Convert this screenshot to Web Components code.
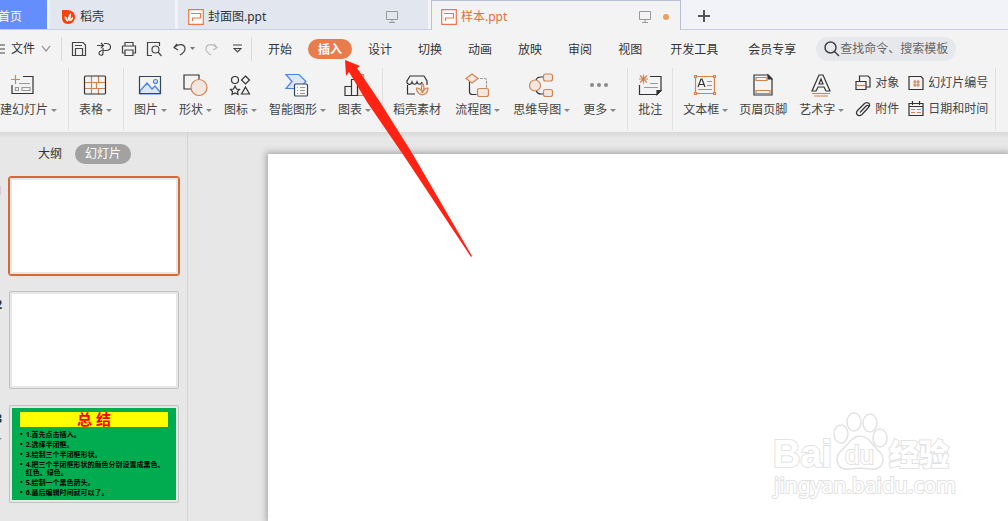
<!DOCTYPE html>
<html lang="zh-CN">
<head>
<meta charset="utf-8">
<title>样本.ppt</title>
<style>
  body {
    margin: 0;
    overflow: hidden;
    font: 12px/16px "Noto Sans", "Noto Sans CJK SC", sans-serif;
    color: #333;
    background: #f3f3f3;
  }
  svg {
    display: block;
    flex: none;
    fill: none;
    stroke: #333;
    stroke-width: 1.2;
  }
  .o { stroke: #d08450; }
  .of { stroke: #d08450; fill: #f2e6df; }
  .b { stroke: #4b80e8; fill: #dce6f8; }
  .g { stroke: #999; }
</style>
</head>
<body>

<app-window>
  <tab-strip slot="tabs">
    <doc-tab kind="home" label="首页"></doc-tab>
    <doc-tab kind="short" label="稻壳">
      <svg width="14" height="16" viewBox="0 0 14 16"><path d="M0 1h5c5 0 8 3 8 7s-3 7-7 7c-4 0-6-3-6-6z" fill="#f9420b" stroke="none"/><path d="M6 13C3 11 2 9 3 7c2 1 3 3 3 6zM6 12c0-3 0-6 3-8 0 4 0 6-3 8zM7 12c1-2 2-3 4-4 0 3-1 4-4 4z" fill="#fff" stroke="none"/></svg>
    </doc-tab>
    <doc-tab label="封面图.ppt" screen>
      <svg width="16" height="16" viewBox="0 0 16 16"><path d="M.7.7h14.6v14.6H.7z" fill="#fff" stroke="#ef7448"/><path d="M3 4.500h9.500v4.500H4.500V12" stroke="#ef7448"/></svg>
    </doc-tab>
    <doc-tab kind="active" label="样本.ppt" screen>
      <svg width="16" height="16" viewBox="0 0 16 16"><path d="M.7.7h14.6v14.6H.7z" fill="#fff" stroke="#ef7448"/><path d="M3 4.500h9.500v4.500H4.500V12" stroke="#ef7448"/></svg>
    </doc-tab>
  </tab-strip>

  <menu-row slot="menu">
    <menu-item>开始</menu-item>
    <menu-item active>插入</menu-item>
    <menu-item>设计</menu-item>
    <menu-item>切换</menu-item>
    <menu-item>动画</menu-item>
    <menu-item>放映</menu-item>
    <menu-item>审阅</menu-item>
    <menu-item>视图</menu-item>
    <menu-item wide>开发工具</menu-item>
    <menu-item wide>会员专享</menu-item>
    <command-search slot="search"></command-search>
  </menu-row>

  <ribbon-bar slot="ribbon">
    <ribbon-group first>
      <tool-button label="新建幻灯片" menu>
        <svg width="24" height="24"><path d="M13 3.500h10v17H2V12"/><path class="o" d="M1 6.500h9M5.500 2v9"/><path class="g" d="M9 10.500h11M5.500 14.500h3v3h-3zM12 14.500h8v3h-8z"/></svg>
      </tool-button>
    </ribbon-group>
    <ribbon-group>
      <tool-button label="表格" menu>
        <svg width="24" height="24"><path class="o" d="M2 9.500h20M2 15.500h20M8.500 3v18M15.500 3v6.500M13.500 9.500v6M15.500 15.500v6"/><rect x="1.500" y="3" width="21" height="18" rx="1"/></svg>
      </tool-button>
    </ribbon-group>
    <ribbon-group>
      <tool-button label="图片" menu>
        <svg width="24" height="24"><path class="b" d="M2 18l7-8 5 6 3-3 5 6v2H2z"/><circle class="b" cx="17.500" cy="8.500" r="2"/><path d="M1.500 3.500h21v17h-21z" stroke="#34465c"/></svg>
      </tool-button>
      <tool-button label="形状" menu>
        <svg width="26" height="24"><path d="M2 2h15v14H2z"/><circle class="of" cx="17" cy="14.500" r="8"/></svg>
      </tool-button>
      <tool-button label="图标" menu>
        <svg width="22" height="24"><circle cx="6" cy="7" r="3.500"/><path d="M16.500 3l4 4-4 4-4-4zM16.500 14l4 7h-8zM6 13l1.500 3 3 .5-2 2 .5 3-3-1.500-3 1.500.5-3-2-2 3-.5z"/></svg>
      </tool-button>
      <tool-button label="智能图形" menu>
        <svg width="26" height="24"><path class="b" d="M2 1.500h13l7 7-7 7H2l6-7z"/><rect x="10.500" y="11" width="13" height="12" rx="1" fill="#f7f7f7" stroke="#34465c"/><path class="g" d="M13 14.500h1M16 14.500h5M13 17.500h1M16 17.500h5M13 20.500h1M16 20.500h5"/></svg>
      </tool-button>
      <tool-button label="图表" menu>
        <svg width="22" height="24"><path class="of" d="M14.500 1.500h6v21h-6z"/><path d="M8.500 6.500h6v16h-6zM2 13.500h6.500v9H2z"/></svg>
      </tool-button>
    </ribbon-group>
    <ribbon-group loose>
      <tool-button label="稻壳素材">
        <svg width="24" height="24"><path d="M2.500 12v9H10M2 10V8l3-5h14l3 5v4M2 10c2 2 4 2 5-1 1 3 4 3 5 0 1 3 4 3 5 0"/><path class="of" d="M17.500 22c-4.500-1-6-4-6-7 3 0 5 2 6 5-1.500-4-1.500-7 0-10 2 3 2 6 0 10 1-3 3-5 5.500-5 0 4-1.500 6-5.500 7z"/></svg>
      </tool-button>
      <tool-button label="流程图" menu>
        <svg width="26" height="24"><path d="M5.500 9v10c0 2 1 2.500 3 2.500h4"/><path class="g" stroke-dasharray="3 1" d="M12 5.500h9c1 0 1.500 1 1.500 2V16"/><path class="of" d="M8 1l6 4.500-6 4.500-6-4.500z"/><rect class="of" x="13.500" y="15.500" width="11" height="8" rx="2"/></svg>
      </tool-button>
      <tool-button label="思维导图" menu>
        <svg width="26" height="24"><path d="M8 7q1-3 5-3h3M8 17q1 4 5 4h3"/><circle class="of" cx="7" cy="12.500" r="5.500"/><rect class="of" x="15.500" y="1" width="9" height="7" rx="2"/><rect class="of" x="15.500" y="16.500" width="9" height="7" rx="2"/></svg>
      </tool-button>
      <tool-button label="更多" menu>
        <svg width="20" height="24"><g fill="#888" stroke="none"><circle cx="3" cy="12" r="2"/><circle cx="10" cy="12" r="2"/><circle cx="17" cy="12" r="2"/></g></svg>
      </tool-button>
    </ribbon-group>
    <ribbon-group tight>
      <tool-button label="批注">
        <svg width="24" height="24"><path d="M12 3.500h11v14l-4 4H1.500V12"/><path d="M19 21.500v-4h4z" fill="#333"/><path class="g" d="M12 10.500h8M6 14.500h14"/><path class="o" d="M5.500 1.500v9M1 6h9M2 2.500l7 7M9 2.500l-7 7"/></svg>
      </tool-button>
    </ribbon-group>
    <ribbon-group tight>
      <tool-button label="文本框" menu>
        <svg width="24" height="24"><path class="o" d="M2.500 3.500h19v17h-19z"/><g class="of"><path d="M1.500 2.500h2v2h-2zM20.500 2.500h2v2h-2zM1.500 19.500h2v2h-2zM20.500 19.500h2v2h-2z"/></g><path d="M5 14l3-8h1l3 8M6 11.500h5"/><path class="g" d="M14 8.500h5M14 12.500h5M5 16.500h14"/></svg>
      </tool-button>
      <tool-button label="页眉页脚">
        <svg width="20" height="24"><path d="M1 2h14l4 4v16H1z" stroke-linejoin="round"/><path d="M15 2v4h4z" fill="#333"/><path class="o" d="M3 4.500h11v3H3zM3 17.500h14v3H3z"/></svg>
      </tool-button>
      <tool-button label="艺术字" menu>
        <svg width="22" height="24"><path d="M9 2h4l7 16h-4l-2-4H8l-2 4H2zM11 6l-2 5h4z"/><path class="o" d="M2 20.500h18M4 23h14"/></svg>
      </tool-button>
      <tool-stack>
        <tool-button label="对象" inline>
          <svg width="16" height="16"><path d="M4.500 6V1H13l2 2v9h-4M1 6.500h10v8H1z"/><path class="o" d="M2 10.500h8"/></svg>
        </tool-button>
        <tool-button label="附件" inline>
          <svg width="16" height="16"><path d="M5 11.500L11 5c2-1.500 3.500 0 2 2l-6 6.500c-4 3-7-1-4.500-4L9 3c3-3 7-.5 5 3"/></svg>
        </tool-button>
      </tool-stack>
      <tool-stack>
        <tool-button label="幻灯片编号" inline>
          <svg width="16" height="16"><path d="M1 1.500h12l2 2v11H1z"/><path class="o" d="M5 7h7M5 10h7M7 5v7M10 5v7"/></svg>
        </tool-button>
        <tool-button label="日期和时间" inline>
          <svg width="16" height="16"><path d="M1 2.500h14v12H1zM4.500 0v4M11.500 0v4M1 5.500h14"/><path class="o" d="M3 8.500h4M9 8.500h4M3 11.500h4M9 11.500h4"/></svg>
        </tool-button>
      </tool-stack>
    </ribbon-group>
  </ribbon-bar>

  <slide-panel slot="side">
    <slide-thumb number="1" selected></slide-thumb>
    <slide-thumb number="2"></slide-thumb>
    <slide-thumb number="3" animated><summary-slide></summary-slide></slide-thumb>
  </slide-panel>

  <slide-canvas></slide-canvas>
  <pointer-arrow slot="overlay"></pointer-arrow>
  <site-watermark slot="overlay"></site-watermark>
</app-window>

<script>
const base = `
  * { box-sizing: border-box; }
  button {
    border: 0;
    margin: 0;
    padding: 0;
    background: none;
    font: inherit;
    color: inherit;
    white-space: nowrap;
  }
`;

function define(name, render) {
  customElements.define(name, class extends HTMLElement {
    connectedCallback() {
      if (this.shadowRoot) return;
      this.attachShadow({ mode: 'open' });
      this.shadowRoot.innerHTML = render(this);
    }
  });
}

// the window is scrolled 12px past its left edge
define('app-window', () => `
  <style>
    ${base}
    :host {
      display: flex;
      flex-direction: column;
      position: relative;
      height: 100vh;
      margin-left: -12px;
    }
    main {
      flex: 1;
      display: flex;
      min-height: 0;
      background: linear-gradient(#d8d8d8, #e7e7e7 6px);
    }
  </style>
  <slot name="tabs"></slot>
  <slot name="menu"></slot>
  <slot name="ribbon"></slot>
  <main><slot name="side"></slot><slot></slot></main>
  <slot name="overlay"></slot>
`);

define('tab-strip', () => `
  <style>
    ${base}
    :host {
      display: flex;
      height: 30px;
      gap: 3px;
      background: linear-gradient(#f1f3f9 29px, #c9cfdf 29px);
    }
    button { padding: 2px 13px 0; }
    svg { display: block; }
  </style>
  <slot></slot>
  <button aria-label="新建标签"><svg width="14" height="14"><path d="M1 7h12M7 1v12" stroke="#555" stroke-width="2"/></svg></button>
`);

define('doc-tab', el => `
  <style>
    ${base}
    :host {
      display: block;
      width: 250px;
      height: 29px;
      background: #e2e6ef;
    }
    :host([kind="home"]) { width: 59px; background: #648efc; color: #fff; }
    :host([kind="short"]) { width: 125px; }
    :host([kind="active"]) {
      height: 30px;
      background: #f3f3f3;
      color: #e2703a;
      box-shadow: inset 1px 1px #b9c0d4, inset -1px 0 #b9c0d4;
    }
    button {
      display: flex;
      align-items: center;
      gap: 4px;
      width: 100%;
      height: 34px;
      padding: 0 12px 0 10px;
    }
    :host([kind="short"]) button { padding-left: 12px; }
    .screen { margin-left: auto; margin-right: 8px; }
    .dot { width: 6px; height: 6px; border-radius: 3px; }
    :host([kind="active"]) .dot { background: #e8a05a; }
  </style>
  <button>
    <slot></slot><span>${el.getAttribute('label')}</span>
    ${el.hasAttribute('screen') ? `
    <svg class="screen" width="12" height="12" fill="none" stroke="#999"><path d="M.5.500h11v8H.5zM6 8.500v3M3 11.500h6"/></svg>
    <i class="dot"></i>` : ''}
  </button>
`);

define('menu-row', () => `
  <style>
    ${base}
    :host {
      display: flex;
      align-items: center;
      height: 38px;
      padding-left: 6px;
    }
    svg { display: block; fill: none; stroke: #444; stroke-width: 1.2; }
    .file { display: flex; align-items: center; gap: 6px; padding-right: 10px; }
    .quick {
      display: flex;
      align-items: center;
      gap: 9px;
      height: 24px;
      padding: 0 9px;
      border: solid #dcdcdc;
      border-width: 0 1px;
    }
    .undo { display: flex; align-items: center; gap: 3px; padding-left: 2px; }
    .more { padding-left: 6px; }
    nav { display: flex; gap: 6px; padding: 0 8px 0 6px; }
  </style>
  <button class="file">
    <svg width="11" height="12"><path d="M0 2h11M0 6h11M0 10h11"/></svg>文件
    <svg width="10" height="8"><path d="M1 1l4 5 4-5" stroke="#888"/></svg>
  </button>
  <div class="quick">
    <button aria-label="保存"><svg width="16" height="16"><path d="M2 1.500h10l2.500 2.500v10.500h-13v-13zM4.500 14V7.500h7V14M4 4.500h7"/></svg></button>
    <button aria-label="输出"><svg width="16" height="16"><path d="M1 4.500h6M5 2l2.500 2.500L5 7M8 2.500h2c6 0 6 7 0 7H7M7 7v5c0 3-4 3-4 0s5-2.500 7-2.500"/></svg></button>
    <button aria-label="打印"><svg width="16" height="16"><path d="M4 5V1.500h8V5M4 12H1.500V5h13v7H12M4 9h8v5.500H4z"/></svg></button>
    <button aria-label="打印预览"><svg width="16" height="16"><path d="M6 14.500H1.500v-13h12V5"/><circle cx="9.500" cy="8.500" r="3.500"/><path d="M12 11l3.500 4"/></svg></button>
    <button class="undo" aria-label="撤销">
      <svg width="14" height="14"><path d="M4 2L1 5.500 5 8M1 5.500C6 1 12 2 12 7c0 3-2 4-5 6"/></svg>
      <svg width="5" height="4"><path d="M0 0h5L2.500 3z" fill="#777" stroke="none"/></svg>
    </button>
    <button aria-label="恢复"><svg width="14" height="14"><path d="M10 2l3 3.500L9 8M13 5.500C8 1 2 2 2 7c0 3 2 4 5 6" stroke="#bbb"/></svg></button>
    <button class="more" aria-label="更多命令"><svg width="9" height="10"><path d="M0 1h9M1 4.500h7L4.500 8z"/></svg></button>
  </div>
  <nav><slot></slot></nav>
  <slot name="search"></slot>
`);

define('menu-item', () => `
  <style>
    ${base}
    :host { display: block; }
    button { height: 20px; padding: 2px 10px 0; border-radius: 10px; }
    :host([wide]) button { padding: 2px 12px 0; }
    :host([active]) button { background: #e87c4b; color: #fff; font-weight: bold; }
  </style>
  <button><slot></slot></button>
`);

define('command-search', () => `
  <style>
    ${base}
    :host { display: block; }
    label {
      display: flex;
      align-items: center;
      width: 140px;
      height: 24px;
      padding-left: 8px;
      border-radius: 12px;
      background: #e6e8eb;
    }
    svg { flex: none; }
    input {
      width: 116px;
      padding: 0;
      border: 0;
      outline: 0;
      background: none;
      font: inherit;
    }
    input::placeholder { color: #666; opacity: 1; }
  </style>
  <label>
    <svg width="16" height="16" fill="none" stroke="#444" stroke-width="1.500"><circle cx="6.500" cy="6.500" r="5.500"/><path d="M10.500 10.500l4.500 4.500"/></svg>
    <input type="text" placeholder="查找命令、搜索模板" aria-label="查找命令、搜索模板">
  </label>
`);

define('ribbon-bar', () => `
  <style>
    :host { display: flex; height: 64px; }
  </style>
  <slot></slot>
`);

define('ribbon-group', () => `
  <style>
    :host {
      display: flex;
      flex: none;
      gap: 13px;
      height: 62px;
      box-sizing: border-box;
      padding: 5px 12px 0 10px;
      border-right: 1px solid #e0e0e0;
    }
    :host([first]) { padding-left: 0; }
    :host([loose]) { gap: 14px; }
    :host([tight]) { gap: 12px; padding-right: 10px; }
  </style>
  <slot></slot>
`);

define('tool-button', el => `
  <style>
    ${base}
    :host { display: block; color: #444; }
    button { display: flex; flex-direction: column; align-items: center; gap: 5px; }
    :host([inline]) button { flex-direction: row; gap: 4px; }
    span { display: flex; align-items: center; gap: 3px; }
    :host([menu]) span::after {
      content: "";
      border: solid transparent;
      border-width: 3px 3px 0;
      border-top-color: #888;
      margin-right: -1px;
    }
  </style>
  <button><slot></slot><span>${el.getAttribute('label')}</span></button>
`);

define('tool-stack', () => `
  <style>
    :host { display: flex; flex-direction: column; gap: 10px; padding-top: 2px; }
    :host(:last-child) { margin: 0 -3px; }
  </style>
  <slot></slot>
`);

define('slide-panel', () => `
  <style>
    ${base}
    :host {
      display: block;
      flex: none;
      width: 200px;
      border-right: 1px solid #d3d3d3;
      box-sizing: border-box;
      padding-top: 12px;
    }
    header { display: flex; gap: 3px; padding-left: 40px; margin-bottom: 12px; }
    button { height: 20px; padding: 0 10px; border-radius: 10px; }
    .on { background: #a2a2a2; color: #fff; }
    .list { display: flex; flex-direction: column; gap: 14px; }
  </style>
  <header><button>大纲</button><button class="on">幻灯片</button></header>
  <div class="list"><slot></slot></div>
`);

define('slide-thumb', el => `
  <style>
    ${base}
    :host { display: flex; gap: 6px; }
    .side {
      width: 14px;
      padding-top: 7px;
      text-align: right;
      font-weight: bold;
    }
    :host([selected]) .side { color: #d56a30; }
    svg { display: block; margin: 7px 0 0 3px; }
    .frame {
      width: 172px;
      height: 100px;
      padding: 3px;
      border: 1px solid transparent;
      border-radius: 3px;
      background: #e7e7e7;
    }
    .page { height: 92px; background: #fff; }
    .frame { box-shadow: inset 0 0 0 1px #c2c2c2; }
    :host([selected]) .frame { border-color: #d56a30; box-shadow: inset 0 0 0 1px #d56a30; }
  </style>
  <div class="side">${el.getAttribute('number')}
    ${el.hasAttribute('animated') ? '<svg width="11" height="11"><path d="M5 0l2 4h4L8 7l1 4-4-2-4 2 1-4-2-3h4z" fill="#8a97a8"/></svg>' : ''}
  </div>
  <div class="frame"><div class="page"><slot></slot></div></div>
`);

define('summary-slide', () => `
  <style>
    :host {
      display: block;
      height: 92px;
      box-sizing: border-box;
      padding: 4px 8px;
      background: #00ac4f;
      color: #000;
    }
    h2 {
      margin: 0 0 4px;
      background: #ff0;
      color: #f00;
      font-size: 15px;
      line-height: 15px;
      text-align: center;
    }
    ul { margin: 0; padding: 0; list-style: none; font-size: 7px; font-weight: bold; line-height: 8px; }
    li { display: flex; gap: 3px; margin-bottom: 2px; white-space: nowrap; }
    li::before { content: "•"; }
  </style>
  <h2>总 结</h2>
  <ul>
    <li>1.首先点击插入。</li>
    <li>2.选择半闭框。</li>
    <li>3.绘制三个半闭框形状。</li>
    <li><span>4.把三个半闭框形状的颜色分别设置成黑色、<br>红色、绿色。</span></li>
    <li>5.绘制一个黑色箭头。</li>
    <li>6.最后编辑时间就可以了。</li>
  </ul>
`);

define('slide-canvas', () => `
  <style>
    :host {
      display: flex;
      flex: 1;
      padding: 22px 0 0 80px;
      overflow: hidden;
    }
    .page { flex: 1; background: #fff; box-shadow: 0 0 6px 2px #aaa; }
  </style>
  <div class="page"></div>
`);

define('pointer-arrow', () => `
  <style>
    :host { position: absolute; left: 356px; top: 59px; pointer-events: none; }
    svg { display: block; }
  </style>
  <svg width="130" height="200"><path d="M1 1l15 6-3 2 23 34 32 51 60 103-1 1L60 97 23 43 5 13l-3 4z" fill="#ff2313"/></svg>
`);

define('site-watermark', () => `
  <style>
    :host { position: absolute; right: 50px; bottom: 16px; pointer-events: none; }
    svg { display: block; fill: #fff; stroke: #e2e2e2; stroke-width: 1.500; }
    text { paint-order: stroke; stroke-width: 2; font-family: "Liberation Sans", sans-serif; }
    .brand { font-size: 38px; font-weight: bold; }
    .paw { font-size: 26px; }
    .cn { font: 900 30px "Noto Sans CJK SC", sans-serif; }
    .url { font: 21px "Noto Sans", sans-serif; }
  </style>
  <svg width="188" height="96">
    <text class="brand" x="3" y="58">Bai</text>
    <ellipse cx="71" cy="25" rx="7" ry="9"/>
    <ellipse cx="84" cy="13" rx="7" ry="9"/>
    <ellipse cx="100" cy="14" rx="7" ry="9"/>
    <ellipse cx="110" cy="29" rx="7" ry="9"/>
    <path d="M90 27c7 0 10 5 14 10s9 7 9 13c0 8-6 11-12 10-7-1-15-1-22 0-6 1-12-2-12-10 0-6 5-9 9-13s7-10 14-10z"/>
    <text class="paw" x="75" y="55">du</text>
    <text class="cn" x="119" y="56">经验</text>
    <text class="url" x="4" y="84">jingyan.baidu.com</text>
  </svg>
`);
</script>
</body>
</html>
